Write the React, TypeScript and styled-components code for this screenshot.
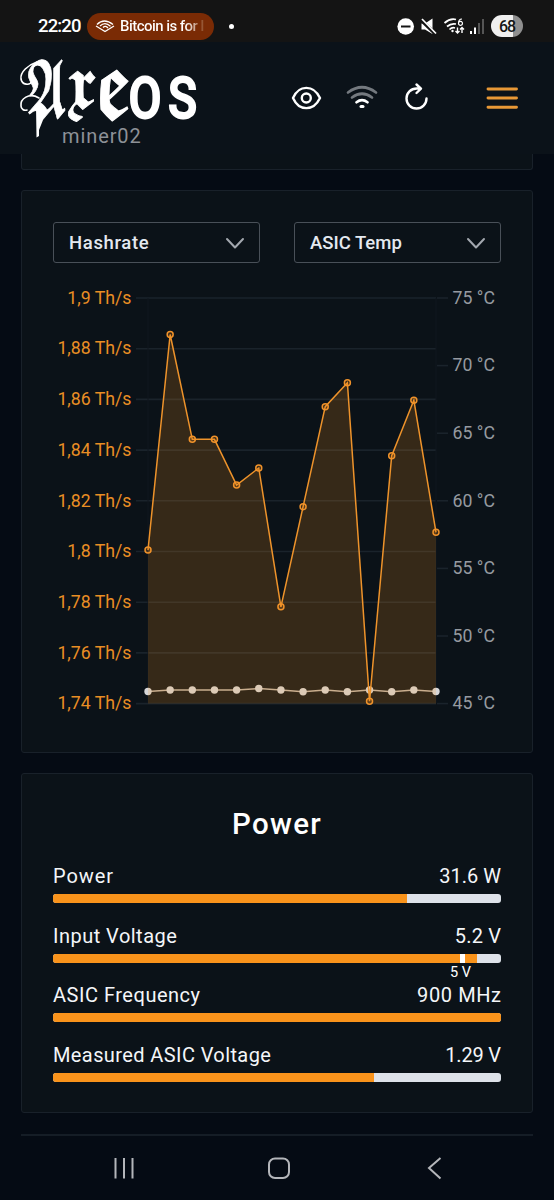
import React from "react";
import styled, { createGlobalStyle } from "styled-components";

const Global = createGlobalStyle`
  * { box-sizing: border-box; }
  body { margin: 0; background: #050b14; color: #fff; font-family: Roboto, sans-serif; }
`;

const Screen = styled.div`
  width: 554px;
  height: 1200px;
  display: flex;
  flex-direction: column;
  overflow: hidden;
  background: #050b14;
`;

const StatusBar = styled.div`
  height: 42px;
  flex: none;
  display: flex;
  align-items: center;
  padding: 10px 31px 0 38px;
  background: #141414;
`;

const Clock = styled.span`
  width: 43px;
  font-size: 18.5px;
  line-height: 27px;
  font-weight: 500;
  letter-spacing: -0.85px;
  white-space: nowrap;
`;

const Pill = styled.div`
  display: flex;
  align-items: center;
  width: 127px;
  height: 27px;
  margin-left: 6px;
  padding-left: 8px;
  gap: 5px;
  border-radius: 14px;
  background: #7a2b05;
`;

const PillText = styled.span`
  font-size: 15px;
  font-weight: 500;
  letter-spacing: -0.55px;
  white-space: pre;
  background: linear-gradient(90deg, #fff 78%, #b98a70 93%, #8a4520 100%);
  background-clip: text;
  color: transparent;
`;

const Dot = styled.span`
  width: 5px;
  height: 5px;
  margin-left: 15px;
  border-radius: 50%;
  background: #fff;
`;

const StatusIcons = styled.div`
  display: flex;
  align-items: center;
  margin-left: auto;
`;

const Battery = styled.div`
  width: 32px;
  height: 22px;
  margin-left: 6px;
  border-radius: 11px;
  background: linear-gradient(90deg, #f0f0f0 68%, #8f8f8f 68%);
  color: #151515;
  font-size: 16px;
  line-height: 23px;
  font-weight: 500;
  letter-spacing: -1px;
  text-align: center;
`;

const Header = styled.header`
  height: 112px;
  flex: none;
  display: flex;
  padding-left: 18px;
  background: #0b1219;
`;

const Brand = styled.div`
  width: 273px;
  display: flex;
  flex-direction: column;
`;

const LogoArt = styled.svg`
  display: block;
  flex: none;
  height: 82px;
  overflow: visible;
`;

const HostName = styled.div`
  padding-left: 44px;
  color: #8d9197;
  font-size: 20px;
  line-height: 24px;
  letter-spacing: 0.9px;
`;

const Actions = styled.div`
  display: flex;
  align-items: center;
  height: 112px;
`;

const Content = styled.main`
  display: flex;
  flex-direction: column;
  padding: 0 21px;
`;

const Card = styled.section`
  border: 1px solid #19212a;
  border-radius: 3px;
  background: #0b1218;
`;

const PreviousCard = styled(Card)`
  height: 16px;
  margin-bottom: 20px;
  border-top: 0;
  border-top-left-radius: 0;
  border-top-right-radius: 0;
`;

const ChartCard = styled(Card)`
  height: 563px;
  margin-bottom: 20px;
  padding-top: 31px;
`;

const PowerCard = styled(Card)`
  height: 340px;
  padding: 30px 31px 0;
  margin-bottom: 21px;
`;

const NextCard = styled.div`
  height: 1.5px;
  background: #151d26;
`;

const Selects = styled.div`
  display: flex;
  justify-content: space-between;
  padding: 0 31px;
  margin-bottom: 15px;
`;

const Select = styled.div`
  display: flex;
  align-items: center;
  justify-content: space-between;
  width: 207px;
  height: 41px;
  padding: 0 14px 0 15px;
  border: 1px solid #495058;
  border-radius: 3px;
  color: #e4e9f0;
  font-size: 18.5px;
  font-weight: 500;
`;

const Label = styled.span<{ $spacing?: number }>`
  letter-spacing: ${(p) => p.$spacing ?? 0}px;
  margin-right: ${(p) => -(p.$spacing ?? 0)}px;
`;

const Title = styled.h2`
  margin: 0 0 20px;
  font-size: 29.5px;
  line-height: 40px;
  font-weight: 500;
  letter-spacing: 1.3px;
  text-align: center;
`;

const Metric = styled.div`
  height: 59.7px;
`;

const MetricHead = styled.div`
  display: flex;
  justify-content: space-between;
  font-size: 20px;
  line-height: 24px;
  color: #f4f6f9;
`;

const Track = styled.div`
  position: relative;
  height: 9px;
  margin-top: 6px;
  border-radius: 3px;
  background: #dee2e9;
`;

const Fill = styled.div<{ $full: boolean }>`
  height: 9px;
  border-radius: ${(p) => (p.$full ? "3px" : "3px 0 0 3px")};
  background: #f9931b;
`;

const Marker = styled.div`
  position: absolute;
  left: 407px;
  top: 0;
  width: 5px;
  height: 9px;
  background: #fff;
`;

const MarkerLabel = styled.span`
  position: absolute;
  left: 397px;
  top: 11px;
  font-size: 14.5px;
  line-height: 16px;
  white-space: nowrap;
`;

const NavBar = styled.nav`
  display: flex;
  height: 64px;
`;

const X0 = 148;
const STEP = 288 / 13;
const hash = [550, 334.5, 439.3, 439.3, 485, 468, 606.8, 506.7, 406.7, 382.7, 701.3, 455.7, 400.3, 532.3];
const temp = [691.5, 690, 690, 690, 690, 688.5, 690, 691.7, 690, 691.7, 690, 691.7, 690, 691.5];
const line = (ys: number[]) => ys.map((y, i) => `${X0 + i * STEP},${y}`).join(" ");
const hashLabels = ["1,9", "1,88", "1,86", "1,84", "1,82", "1,8", "1,78", "1,76", "1,74"];
const tempLabels = [75, 70, 65, 60, 55, 50, 45];

function Chart() {
  return (
    <svg width="509" height="440" viewBox="22 278 509 440" fontFamily="Roboto" fontSize="17.7">
      {hashLabels.map((t, i) => {
        const y = 298 + i * 50.7;
        return (
          <g key={t}>
            <path d={`M136 ${y}H436`} stroke="#1a232b" strokeWidth="1.6" />
            <text x="131.5" y={y + 5.7} textAnchor="end" fill="#e98e24">{t} Th/s</text>
          </g>
        );
      })}
      {tempLabels.map((t, i) => {
        const y = 298 + i * 67.6;
        return (
          <g key={t}>
            <path d={`M437 ${y}H448`} stroke="#1a232b" strokeWidth="1.6" />
            <text x="452.5" y={y + 5.7} fill="#969aa0">{t} °C</text>
          </g>
        );
      })}
      <path d="M148 298V703M436 298V703" stroke="#10171e" />
      <polyline points={line(temp)} fill="none" stroke="#c0b4a8" strokeWidth="1.5" />
      {temp.map((y, i) => <circle key={i} cx={X0 + i * STEP} cy={y} r="3.7" fill="#d6d6d8" />)}
      <polygon points={`148,703.6 ${line(hash)} 436,703.6`} fill="#fb931c" fillOpacity="0.18" />
      <polyline points={line(hash)} fill="none" stroke="#ee932b" strokeWidth="1.5" />
      {hash.map((y, i) => (
        <circle key={i} cx={X0 + i * STEP} cy={y} r="3" fill="#fb931c" fillOpacity="0.2" stroke="#f0922a" strokeWidth="1.5" />
      ))}
    </svg>
  );
}

const Chevron = () => (
  <svg width="20" height="14" viewBox="0 0 20 14" fill="none" stroke="#a3a8af" strokeWidth="2" strokeLinecap="round" strokeLinejoin="round">
    <path d="M2 3L10 11.5L18 3" />
  </svg>
);

function Logo() {
  return (
    <LogoArt width="190" viewBox="18 42 190 82" fill="#fff" stroke="#fff">
      <g fontFamily='"DejaVu Math TeX Gyre", "DejaVu Sans", serif' fontSize="60" strokeWidth="0.8">
        <text transform="translate(25 117) scale(0.68 1.2)">𝕬</text>
        <text transform="translate(64 107) scale(0.9 1.12)">𝖝</text>
        <text transform="translate(95 118) scale(1.16 1.5)">𝖊</text>
      </g>
      <text transform="translate(128.500 117.500) scale(0.8 0.97)" fontFamily="Roboto" fontWeight="500" fontSize="60" letterSpacing="8" strokeWidth="2">OS</text>
      <path d="M37 62C28 65 20 72 21 79C22 85 30 86 32 81M39 98C29 92 20 99 21 106C21 109 24 111 27 110" fill="none" strokeWidth="1.6" strokeLinecap="round" />
      <path d="M36 106H43V120L39 130V136L36.500 137.500Z" stroke="none" />
    </LogoArt>
  );
}

function StatusGlyphs() {
  return (
    <svg width="90" height="24" viewBox="395 14 90 24" fill="none" stroke="#fff">
      <circle cx="405.7" cy="26.5" r="8.3" fill="#fff" stroke="none" />
      <path d="M401 26.5H410.5" stroke="#141414" strokeWidth="2" />
      <path d="M421.5 23.5H425L432.5 18.5V34L425 29.5H421.5Z" fill="#fff" stroke="none" />
      <path d="M421 20L436 34.5" stroke="#141414" strokeWidth="3.5" />
      <path d="M422 19L436 33.5" strokeWidth="1.7" />
      <path d="M444.5 23Q450 18 456 19.5M447 26.5Q451 23 456 24M449.5 29.5Q452 27 455 28" strokeWidth="1.7" />
      <circle cx="452.5" cy="31" r="1.2" fill="#fff" stroke="none" />
      <path d="M462 19Q458.5 19 458.5 23.5A2 2 0 1 0 459 22" strokeWidth="1.2" />
      <path d="M457.5 27.5V33M455.5 31L457.5 33L459.5 31M462 33V27.5M460 29.5L462 27.5L464 29.5" strokeWidth="1.4" />
      <path d="M471 31V34M475 27.5V34" strokeWidth="2" />
      <path d="M479 23V34M483 19V34" stroke="#555" strokeWidth="2" />
    </svg>
  );
}

function HeaderIcons() {
  return (
    <svg width="240" height="60" viewBox="291 68 240 60" fill="none" stroke="#fff" strokeWidth="2.4" strokeLinecap="round" strokeLinejoin="round">
      <path d="M293 98C299 84.500 313.500 84.500 320 98C313.500 111.500 299 111.500 293 98Z" />
      <circle cx="306.300" cy="98" r="4.500" />
      <g strokeWidth="2.700">
        <path d="M348 92.500Q362 82 376 92.500" stroke="#74797f" />
        <path d="M352 97.500Q362 90 372 97.500" stroke="#74797f" />
        <path d="M356.500 102.200Q362 98 367.500 102.200" />
        <path d="M361 106.500H363" strokeWidth="3" />
      </g>
      <path d="M420.500 88.500H416.500A10 10 0 1 0 426.500 98.500M416.500 84.500L421 88.700L416.500 93" />
      <path d="M488 89H516.500M488 98H516.500M488 107.300H516.500" stroke="#e89836" strokeWidth="2.900" />
    </svg>
  );
}

const metrics = [
  { name: "Power", value: "31.6 W", width: 354, spacing: 0.9, valueSpacing: 0 },
  { name: "Input Voltage", value: "5.2 V", width: 424, mark: "5 V", spacing: 0.48, valueSpacing: 0.2 },
  { name: "ASIC Frequency", value: "900 MHz", width: 448, spacing: 0.52, valueSpacing: 0.6 },
  { name: "Measured ASIC Voltage", value: "1.29 V", width: 321, spacing: 0.4, valueSpacing: -0.2 },
];

export default function App() {
  return (
    <Screen>
      <Global />
      <StatusBar>
        <Clock>22:20</Clock>
        <Pill>
          <svg width="20" height="14" viewBox="0 0 20 14" fill="none" stroke="#fff" strokeWidth="1.3">
            <path d="M1 7L10 12.500L19 7M2 5.500Q9 -1.500 18 5.500M5 7Q10 2 15.500 7.300M8 8.500Q10.500 6 13 9" />
          </svg>
          <PillText>Bitcoin is for l</PillText>
        </Pill>
        <Dot />
        <StatusIcons>
          <StatusGlyphs />
          <Battery>68</Battery>
        </StatusIcons>
      </StatusBar>
      <Header>
        <Brand>
          <Logo />
          <HostName>miner02</HostName>
        </Brand>
        <Actions><HeaderIcons /></Actions>
      </Header>
      <Content>
        <PreviousCard />
        <ChartCard>
          <Selects>
            <Select><Label $spacing={0.65}>Hashrate</Label><Chevron /></Select>
            <Select><Label $spacing={0}>ASIC Temp</Label><Chevron /></Select>
          </Selects>
          <Chart />
        </ChartCard>
        <PowerCard>
          <Title>Power</Title>
          {metrics.map((m) => (
            <Metric key={m.name}>
              <MetricHead>
                <Label $spacing={m.spacing}>{m.name}</Label>
                <Label $spacing={m.valueSpacing}>{m.value}</Label>
              </MetricHead>
              <Track>
                <Fill $full={m.width === 448} style={{ width: m.width }} />
                {m.mark && <Marker />}
                {m.mark && <MarkerLabel>{m.mark}</MarkerLabel>}
              </Track>
            </Metric>
          ))}
        </PowerCard>
        <NextCard />
      </Content>
      <NavBar>
        <svg width="554" height="64" viewBox="0 1136 554 64" fill="none" stroke="#b4b6ba" strokeWidth="2">
          <path d="M115.500 1158V1178.500M124 1158V1178.500M132.500 1158V1178.500" />
          <rect x="269" y="1158.500" width="20" height="19.500" rx="6" />
          <path d="M440.500 1158L429 1168L440.500 1178.500" />
        </svg>
      </NavBar>
    </Screen>
  );
}
